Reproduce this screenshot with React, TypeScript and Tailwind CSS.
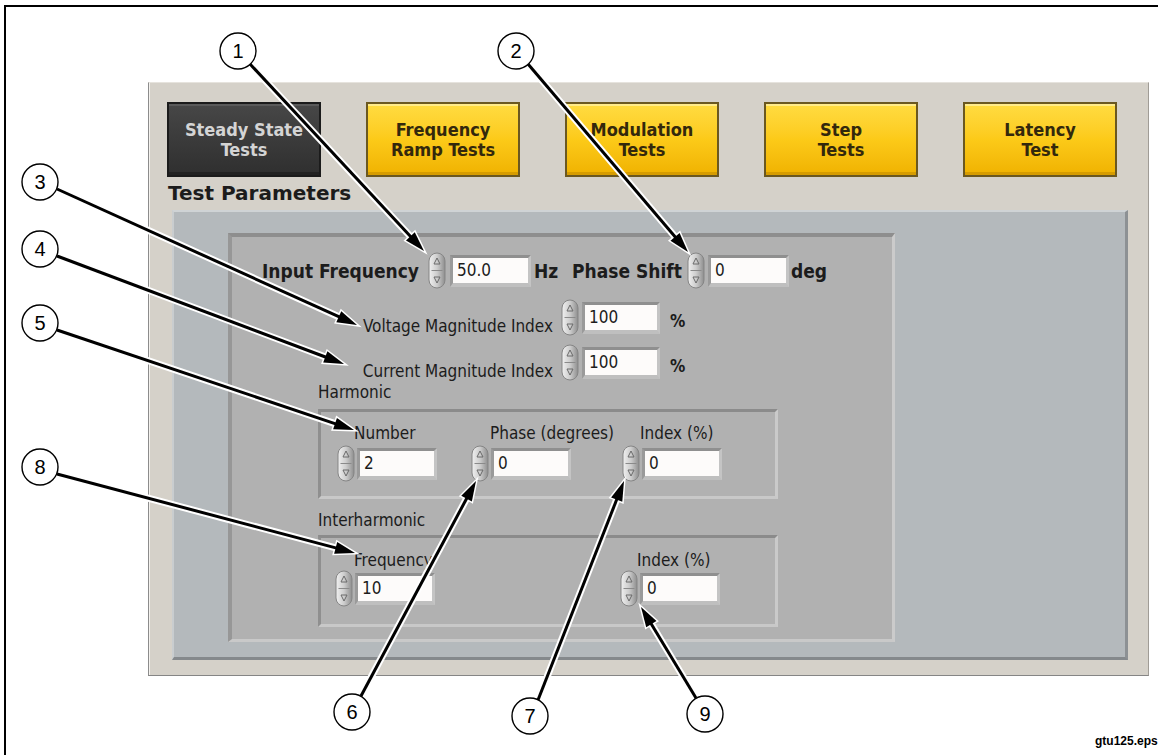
import React from "react";

const ui = "font-['DejaVu_Sans_Condensed','DejaVu_Sans',sans-serif]";

interface Callout {
  n: string;
  cx: number;
  cy: number;
  x1: number;
  y1: number;
  x2: number;
  y2: number;
}

const callouts: Callout[] = [
  { n: "1", cx: 238, cy: 51, x1: 250, y1: 64, x2: 424, y2: 251 },
  { n: "2", cx: 516, cy: 51, x1: 528, y1: 64, x2: 688, y2: 252 },
  { n: "3", cx: 40, cy: 182, x1: 57, y1: 189, x2: 357, y2: 325 },
  { n: "4", cx: 40, cy: 249, x1: 57, y1: 256, x2: 344, y2: 364 },
  { n: "5", cx: 40, cy: 323, x1: 57, y1: 330, x2: 354, y2: 430 },
  { n: "8", cx: 40, cy: 467, x1: 57, y1: 474, x2: 355, y2: 553 },
  { n: "6", cx: 352, cy: 712, x1: 361, y1: 696, x2: 476, y2: 481 },
  { n: "7", cx: 530, cy: 716, x1: 538, y1: 700, x2: 624, y2: 481 },
  { n: "9", cx: 705, cy: 714, x1: 696, y1: 698, x2: 641, y2: 607 },
];

function Arrow({ x1, y1, x2, y2 }: Callout) {
  const dx = x2 - x1;
  const dy = y2 - y1;
  const len = Math.hypot(dx, dy);
  const ux = dx / len;
  const uy = dy / len;
  const nx = -uy;
  const ny = ux;
  const bx = x2 - ux * 20;
  const by = y2 - uy * 20;
  const pts = `${x2},${y2} ${bx + nx * 6},${by + ny * 6} ${bx - nx * 6},${by - ny * 6}`;
  const ex = bx + ux * 3;
  const ey = by + uy * 3;
  return (
    <g>
      <line x1={x1} y1={y1} x2={ex} y2={ey} stroke="#fff" strokeWidth={7} />
      <polygon points={pts} fill="#fff" stroke="#fff" strokeWidth={3} />
      <line x1={x1} y1={y1} x2={ex} y2={ey} stroke="#000" strokeWidth={3} />
      <polygon points={pts} fill="#000" />
    </g>
  );
}

function Spinner() {
  return (
    <svg width="18" height="37" viewBox="0 0 18 37" className="shrink-0">
      <defs>
        <linearGradient id="spin" x1="0" x2="1" y1="0" y2="0">
          <stop offset="0" stopColor="#f0f0f0" />
          <stop offset="0.5" stopColor="#cdcdcd" />
          <stop offset="1" stopColor="#8e8e8e" />
        </linearGradient>
      </defs>
      <rect x="1" y="1" width="16" height="35" rx="8" fill="url(#spin)" stroke="#858585" />
      <polygon points="9,6 6,12 12,12" fill="none" stroke="#6a6a6a" strokeWidth="1" />
      <line x1="3.5" y1="18.5" x2="14.5" y2="18.5" stroke="#8a8a8a" />
      <polygon points="9,31 6,25 12,25" fill="none" stroke="#6a6a6a" strokeWidth="1" />
    </svg>
  );
}

function NumBox({ value, width }: { value: string; width: string }) {
  return (
    <div className="border-t-[3px] border-l-[3px] border-r-[3px] border-b-[4px] border-t-[#8f8f8f] border-l-[#9a9a9a] border-r-[#c4c4c4] border-b-[#bfbfbf]">
      <div className={`h-[25px] ${width} bg-[#fdfbfa] pl-[4px] text-[17px] leading-[25px] text-[#1c1c1c]`}>
        {value}
      </div>
    </div>
  );
}

function TopButton({ label, active }: { label: React.ReactNode; active?: boolean }) {
  return active ? (
    <div className="w-[154px] h-[75px] flex items-center justify-center text-center border-2 border-[#1b1b1b] bg-linear-to-b from-[#474747] to-[#2f2f2f] shadow-[inset_0_2px_0_#5a5a5a,inset_0_-3px_0_#222] text-[18px] leading-[20px] font-bold text-[#d4d4d4]">
      {label}
    </div>
  ) : (
    <div className="w-[154px] h-[75px] flex items-center justify-center text-center border-2 border-[#6b5820] bg-linear-to-b from-[#ffdc40] via-[#fcca18] to-[#f0b200] shadow-[inset_0_2px_0_#ffeb8a,inset_0_-3px_0_#d69c00] text-[18px] leading-[20px] font-bold text-[#33280c]">
      {label}
    </div>
  );
}

export default function App() {
  return (
    <div className={`relative w-[1158px] h-[755px] overflow-hidden bg-white ${ui}`}>
      <div className="ml-[4px] mt-[5px] w-[1200px] h-[800px] border-l-2 border-t-2 border-black">
        {/* LabVIEW front panel */}
        <div className="ml-[142px] mt-[75px] w-[1001px] h-[594px] bg-[#d5d1c9] border border-t-[#e6e3dd] border-l-[#8c8c8c] border-b-[#858585] border-r-[#a09c96] shadow-[inset_1px_0_0_#f4f2ee] flex flex-col">
          <div className="flex gap-[45px] mt-[19px] ml-[18px]">
            <TopButton active label={<>Steady State<br />Tests</>} />
            <TopButton label={<>Frequency<br />Ramp Tests</>} />
            <TopButton label={<>Modulation<br />Tests</>} />
            <TopButton label={<>Step<br />Tests</>} />
            <TopButton label={<>Latency<br />Test</>} />
          </div>

          <div className="mt-[5px] ml-[19px] text-[20px] leading-[23px] font-bold text-[#1c1c1c] font-['DejaVu_Sans',sans-serif]">
            Test Parameters
          </div>

          {/* cluster */}
          <div className="mt-[5px] ml-[23px] w-[956px] h-[450px] bg-[#b4b9bc] border-t-2 border-l-2 border-r-[3px] border-b-[3px] border-t-[#cfd3d5] border-l-[#c9cdcf] border-r-[#8d9194] border-b-[#85898c] pl-[54px] pt-[21px]">
            <div className="w-[667px] h-[409px] bg-[#b1b1b1] border-t-4 border-l-4 border-r-[3px] border-b-[3px] border-t-[#8e8e8e] border-l-[#979797] border-r-[#cbcbcb] border-b-[#c9c9c9] text-[#1c1c1c] text-[17px] leading-[20px]">
              {/* Input Frequency / Phase Shift */}
              <div className="mt-[15px] pl-[30px] h-[37px] flex items-center">
                <span className="w-[166px] text-[19px] font-bold">Input Frequency</span>
                <Spinner />
                <div className="ml-[4px]">
                  <NumBox value="50.0" width="w-[75px]" />
                </div>
                <span className="ml-[3px] w-[38px] text-[19px] font-bold">Hz</span>
                <span className="w-[115px] text-[19px] font-bold">Phase Shift</span>
                <Spinner />
                <div className="ml-[3px]">
                  <NumBox value="0" width="w-[75px]" />
                </div>
                <span className="ml-[2px] text-[19px] font-bold">deg</span>
              </div>

              {/* Voltage */}
              <div className="mt-[10px] h-[37px] flex items-center">
                <span className="w-[323px] pr-[2px] pt-[16px] text-right">Voltage Magnitude Index</span>
                <div className="ml-[6px]"><Spinner /></div>
                <div className="ml-[3px]">
                  <NumBox value="100" width="w-[72px]" />
                </div>
                <span className="ml-[10px] pt-[6px] font-bold">%</span>
              </div>

              {/* Current */}
              <div className="mt-[8px] h-[37px] flex items-center">
                <span className="w-[323px] pr-[2px] pt-[16px] text-right">Current Magnitude Index</span>
                <div className="ml-[6px]"><Spinner /></div>
                <div className="ml-[3px]">
                  <NumBox value="100" width="w-[72px]" />
                </div>
                <span className="ml-[10px] pt-[6px] font-bold">%</span>
              </div>

              {/* Harmonic */}
              <div className="mt-[1px] ml-[86px]">Harmonic</div>
              <div className="mt-[7px] ml-[86px] w-[460px] h-[90px] border-[3px] border-t-[#8b8b8b] border-l-[#8f8f8f] border-r-[#cacaca] border-b-[#c8c8c8] pt-[11px] flex">
                <div className="ml-[16px] w-[134px] flex flex-col">
                  <span className="ml-[17px]">Number</span>
                  <div className="mt-[2px] flex items-center">
                    <Spinner />
                    <div className="ml-[2px]"><NumBox value="2" width="w-[74px]" /></div>
                  </div>
                </div>
                <div className="w-[151px] flex flex-col">
                  <span className="ml-[19px] whitespace-nowrap">Phase (degrees)</span>
                  <div className="mt-[2px] flex items-center">
                    <Spinner />
                    <div className="ml-[2px]"><NumBox value="0" width="w-[74px]" /></div>
                  </div>
                </div>
                <div className="flex flex-col">
                  <span className="ml-[18px]">Index (%)</span>
                  <div className="mt-[2px] flex items-center">
                    <Spinner />
                    <div className="ml-[2px]"><NumBox value="0" width="w-[74px]" /></div>
                  </div>
                </div>
              </div>

              {/* Interharmonic */}
              <div className="mt-[11px] ml-[86px]">Interharmonic</div>
              <div className="mt-[5px] ml-[86px] w-[460px] h-[92px] border-[3px] border-t-[#8b8b8b] border-l-[#8f8f8f] border-r-[#cacaca] border-b-[#c8c8c8] pt-[12px] flex">
                <div className="ml-[14px] w-[285px] flex flex-col">
                  <span className="ml-[19px]">Frequency</span>
                  <div className="flex items-center">
                    <Spinner />
                    <div className="ml-[2px]"><NumBox value="10" width="w-[74px]" /></div>
                  </div>
                </div>
                <div className="flex flex-col">
                  <span className="ml-[17px]">Index (%)</span>
                  <div className="flex items-center">
                    <Spinner />
                    <div className="ml-[2px]"><NumBox value="0" width="w-[74px]" /></div>
                  </div>
                </div>
              </div>
            </div>
          </div>
        </div>

        <div className="mt-[58px] ml-[1089px] whitespace-nowrap text-[12px] leading-[14px] font-bold text-black font-['Liberation_Sans',Arial,sans-serif]">
          gtu125.eps
        </div>
      </div>

      {/* callouts */}
      <svg
        className="absolute left-0 top-0 pointer-events-none"
        width="1158"
        height="755"
        viewBox="0 0 1158 755"
      >
        {callouts.map((c) => (
          <Arrow key={`a${c.n}`} {...c} />
        ))}
        {callouts.map((c) => (
          <g key={`c${c.n}`}>
            <circle cx={c.cx} cy={c.cy} r={18} fill="#fff" stroke="#000" strokeWidth={1.4} />
            <text
              x={c.cx}
              y={c.cy + 7}
              textAnchor="middle"
              fontSize="20"
              fontFamily="'Liberation Sans', Arial, sans-serif"
              fill="#000"
            >
              {c.n}
            </text>
          </g>
        ))}
      </svg>
    </div>
  );
}
